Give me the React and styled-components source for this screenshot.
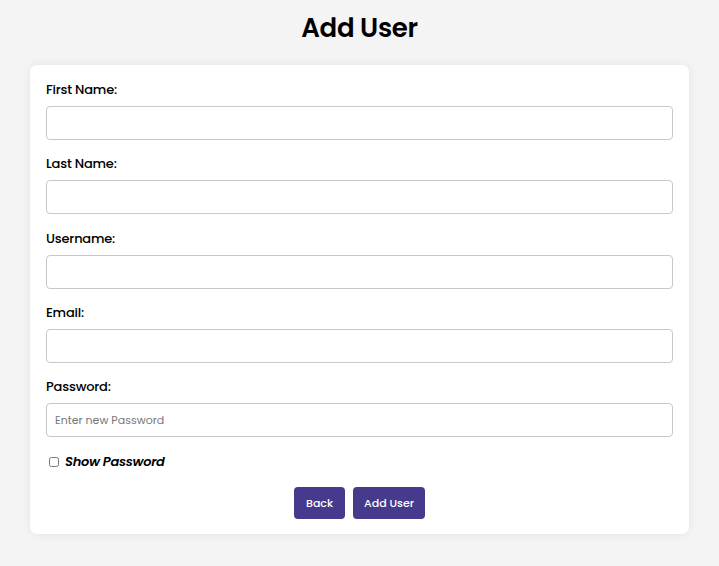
import React, { useState } from "react";
import styled, { createGlobalStyle } from "styled-components";

const Global = createGlobalStyle`
  html, body { margin: 0; padding: 0; background: #f4f4f4; }
  body { font-family: "Poppins", Inter, "Noto Sans", sans-serif; color: #000; }
  * { box-sizing: border-box; }
`;

const Page = styled.div`
  padding: 0 30px 30px;
`;

const Title = styled.h1`
  margin: 12px 0 21px;
  text-align: center;
  font-size: 26px;
  line-height: 32px;
  font-weight: 600;
  letter-spacing: -0.3px;
`;

const Card = styled.form`
  background: #fff;
  border-radius: 7px;
  box-shadow: 0 0 10px rgba(0, 0, 0, 0.07);
  padding: 15px 16px 15px;
  display: flex;
  flex-direction: column;
`;

const Field = styled.div`
  display: flex;
  flex-direction: column;
  margin-bottom: 14.3px;
`;

const Label = styled.label`
  font-size: 13px;
  font-weight: 500;
  line-height: 20px;
  margin-bottom: 6px;
  letter-spacing: -0.2px;
`;

const Input = styled.input`
  height: 34px;
  width: 100%;
  border: 1px solid #c8c8c8;
  border-radius: 4px;
  padding: 0 8px;
  font-family: inherit;
  font-size: 11px;
  outline: none;
  &::placeholder { color: #777; }
`;

const CheckRow = styled.label`
  display: flex;
  align-items: center;
  gap: 6px;
  height: 20px;
  margin-top: 1px;
  padding-left: 3px;
  font-size: 13px;
  font-weight: 600;
  font-style: italic;
  letter-spacing: -0.3px;
`;

const Check = styled.input`
  margin: 0;
  width: 10px;
  height: 10px;
`;

const Actions = styled.div`
  display: flex;
  justify-content: center;
  gap: 8px;
  margin-top: 15px;
`;

const Button = styled.button`
  height: 32px;
  padding: 0 ${(p) => p.$px}px;
  background: #453a8c;
  color: #fff;
  border: none;
  border-radius: 4px;
  font-family: inherit;
  font-size: 11px;
  font-weight: 500;
  cursor: pointer;
`;

const fields = [
  { id: "first", label: "First Name:" },
  { id: "last", label: "Last Name:" },
  { id: "user", label: "Username:" },
  { id: "email", label: "Email:" },
  { id: "pass", label: "Password:", placeholder: "Enter new Password", password: true },
];

export default function App() {
  const [show, setShow] = useState(false);
  return (
    <Page>
      <Global />
      <Title>Add User</Title>
      <Card onSubmit={(e) => e.preventDefault()}>
        {fields.map((f) => (
          <Field key={f.id}>
            <Label htmlFor={f.id}>{f.label}</Label>
            <Input
              id={f.id}
              type={f.password && !show ? "password" : "text"}
              placeholder={f.placeholder}
            />
          </Field>
        ))}
        <CheckRow>
          <Check type="checkbox" checked={show} onChange={(e) => setShow(e.target.checked)} />
          Show Password
        </CheckRow>
        <Actions>
          <Button type="button" $px={12}>Back</Button>
          <Button type="submit" $px={11}>Add User</Button>
        </Actions>
      </Card>
    </Page>
  );
}
